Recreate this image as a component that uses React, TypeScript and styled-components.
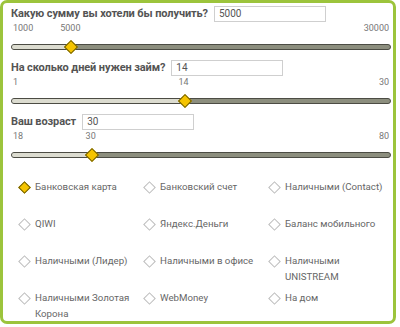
import React from "react";
import styled, { createGlobalStyle } from "styled-components";

const Global = createGlobalStyle`
  html, body { margin: 0; padding: 0; background: #ffffff; }
  body { font-family: Roboto, "Liberation Sans", Arial, sans-serif; }
  * { box-sizing: border-box; }
`;

const Card = styled.div`
  width: 396px;
  height: 324px;
  border: 3px solid #9cc43c;
  border-radius: 7px;
  padding: 2px 2px 0 8px;
  background: #fff;
  overflow: hidden;
`;

const Field = styled.div`
  display: flex;
  flex-direction: column;
`;

const LabelRow = styled.div`
  height: 17px;
  display: flex;
  align-items: center;
  gap: 6px;
`;

const Label = styled.span`
  font-weight: 700;
  font-size: 11px;
  letter-spacing: -0.1px;
  color: #545454;
  white-space: nowrap;
`;

const Input = styled.input`
  width: 112px;
  height: 16px;
  border: 1px solid #cfcfcf;
  padding: 0 0 0 4px;
  font-family: Roboto, "Liberation Sans", Arial, sans-serif;
  font-size: 10px;
  color: #555;
  outline: none;
  background: #fff;
`;

const Scale = styled.div`
  position: relative;
  height: 12px;
  display: flex;
  justify-content: space-between;
  align-items: center;
  padding: 0 2px 0 2px;
  font-size: 9px;
  color: #777;
`;

const ScaleValue = styled.span`
  position: absolute;
  top: 50%;
  transform: translate(-50%, -50%);
`;

const TrackArea = styled.div`
  height: 25px;
  display: flex;
  align-items: center;
`;

const Track = styled.div`
  position: relative;
  flex: 1;
  height: 6px;
  display: flex;
  border: 1px solid #4c4c44;
  border-radius: 4px;
  background: #8c8e7e;
`;

const Fill = styled.div`
  height: 100%;
  background: #dcdcd0;
  border-radius: 3px 0 0 3px;
`;

const Thumb = styled.span`
  position: absolute;
  top: 50%;
  width: 10px;
  height: 10px;
  background: #f5c400;
  border: 1px solid #6a5a00;
  transform: translate(-50%, -50%) rotate(45deg);
`;

const Options = styled.div`
  margin-top: 12px;
  padding-left: 7px;
  display: grid;
  grid-template-columns: repeat(3, 125px);
  grid-auto-rows: 37px;
`;

const Option = styled.div`
  display: flex;
  align-items: flex-start;
  gap: 6px;
`;

const Diamond = styled.span<{ $on?: boolean }>`
  flex: none;
  width: 9px;
  height: 9px;
  margin: 3.5px 0 0 2px;
  background: ${(p) => (p.$on ? "#f5c400" : "#fff")};
  border: 1px solid ${(p) => (p.$on ? "#6a5a00" : "#bdbdbd")};
  transform: rotate(45deg);
`;

const OptionText = styled.span`
  font-size: 9.7px;
  line-height: 16px;
  color: #666;
  max-width: 104px;
`;

type Range = { label: string; min: number; max: number; value: number };

const ranges: Range[] = [
  { label: "Какую сумму вы хотели бы получить?", min: 1000, max: 30000, value: 5000 },
  { label: "На сколько дней нужен займ?", min: 1, max: 30, value: 14 },
  { label: "Ваш возраст", min: 18, max: 80, value: 30 },
];

const options = [
  "Банковская карта",
  "Банковский счет",
  "Наличными (Contact)",
  "QIWI",
  "Яндекс.Деньги",
  "Баланс мобильного",
  "Наличными (Лидер)",
  "Наличными в офисе",
  "Наличными UNISTREAM",
  "Наличными Золотая Корона",
  "WebMoney",
  "На дом",
];

function RangeField({ r }: { r: Range }) {
  const f = (r.value - r.min) / (r.max - r.min);
  const pos = 9 + f * 365;
  return (
    <Field>
      <LabelRow>
        <Label>{r.label}</Label>
        <Input defaultValue={String(r.value)} />
      </LabelRow>
      <Scale>
        <span>{r.min}</span>
        <ScaleValue style={{ left: pos }}>{r.value}</ScaleValue>
        <span>{r.max}</span>
      </Scale>
      <TrackArea>
        <Track>
          <Fill style={{ width: pos }} />
          <Thumb style={{ left: pos }} />
        </Track>
      </TrackArea>
    </Field>
  );
}

export default function App() {
  return (
    <>
      <Global />
      <Card>
        {ranges.map((r) => (
          <RangeField key={r.label} r={r} />
        ))}
        <Options>
          {options.map((o, i) => (
            <Option key={o}>
              <Diamond $on={i === 0} />
              <OptionText>{o}</OptionText>
            </Option>
          ))}
        </Options>
      </Card>
    </>
  );
}
